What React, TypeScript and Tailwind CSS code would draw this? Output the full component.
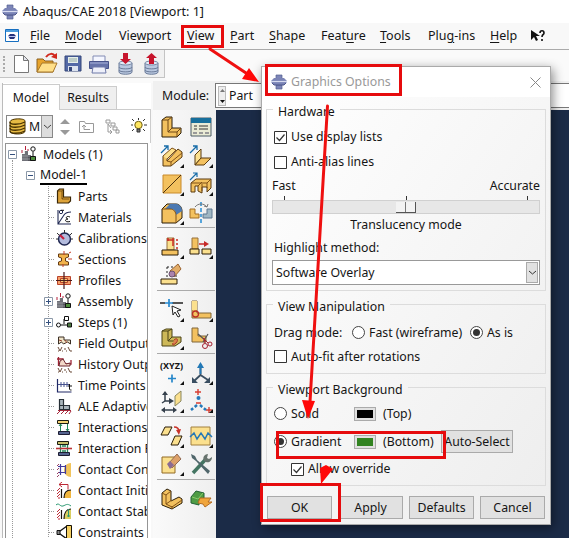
import React from "react";

const INK = "#2a1d08";
const GOLD = "#f3c15f";
const PALE = "#fbe08e";
const DARK = "#c98a2b";

function Svg({ s = 24, children, className = "" }: { s?: number; children: React.ReactNode; className?: string }) {
  return (
    <svg width={s} height={s} viewBox={`0 0 ${s} ${s}`} fill="none" className={`block shrink-0 ${className}`}>
      {children}
    </svg>
  );
}

function Logo() {
  return (
    <Svg s={16}>
      <path d="M5 1h6v4H5zM5 11h6v4H5z" fill="#7d86b8" stroke="#555f91" strokeWidth=".7" />
      <path d="M3 4h10l3 3v1l-3 3H3L0 8V7z" fill="#7b84b6" />
      <path d="M0 7.500h16" stroke="#d8dcf0" strokeWidth="1.200" />
      <path d="M1 9l2 2h10l2-2" stroke="#4d568a" />
    </Svg>
  );
}

const menus: [string, string, string, string][] = [
  ["", "F", "ile", "w-[35px]"],
  ["", "M", "odel", "w-[54px]"],
  ["Vie", "w", "port", "w-[68px]"],
  ["", "V", "iew", "w-[43px]"],
  ["", "P", "art", "w-[39px]"],
  ["", "S", "hape", "w-[52px]"],
  ["Feat", "u", "re", "w-[59px]"],
  ["", "T", "ools", "w-[48px]"],
  ["Plu", "g", "-ins", "w-[62px]"],
  ["", "H", "elp", "w-[41px]"],
];

function DbIcon({ up }: { up?: boolean }) {
  return (
    <Svg s={22}>
      <path d="M4 10v9c0 3 13 3 13 0v-9" fill="#b9c8e0" stroke="#6b7b99" />
      <ellipse cx="10.500" cy="10" rx="6.500" ry="2" fill="#e2eaf5" stroke="#7888a5" />
      <path d="M4 14c0 2.500 13 2.500 13 0M4 17c0 2.500 13 2.500 13 0" stroke="#6b7b99" />
      {up ? <path d="M8 11V5H5l5.500-5L16 5h-3v6z" fill="#c7142c" /> : <path d="M8 0v6H5l5.500 5L16 6h-3V0z" fill="#c7142c" />}
    </Svg>
  );
}

function Toolbar() {
  return (
    <div className="flex h-[28px] w-[165px] items-center border-r border-b border-[#c4c4c4] bg-[#f1f1f1] pl-[3px]">
      <div className="mr-[7px] h-[16px] w-[2px] border-l-2 border-dotted border-[#aaa]" />
      <Svg s={20} className="mr-[3px]">
        <path d="M2.500 1.500h9l5 5v12h-14z" fill="#fff" stroke="#777" />
        <path d="M11.500 1.500v5h5z" fill="#e2e4ec" stroke="#777" />
      </Svg>
      <Svg s={24} className="mr-[5px]">
        <path d="M2 20V7h6l2 2h8v11z" fill="#e7a32b" stroke="#8b6020" />
        <path d="M2 20l5-9h15l-4 9z" fill="#ffe08a" stroke="#a8782a" />
        <path d="M11 5c3-4 7-4 9-1" stroke="#d1281e" strokeWidth="2" />
        <path d="M22 1v6l-6-2z" fill="#d1281e" />
      </Svg>
      <Svg s={18} className="mr-[6px]">
        <path d="M1 1h16v15H1z" fill="#5369a6" stroke="#354779" />
        <path d="M4 2h10v6H4z" fill="#e6efea" />
        <path d="M5 4h8M5 6h8" stroke="#93a9a4" />
        <path d="M4 11h10v5H4z" fill="#dce3ef" />
        <path d="M5 12h3v4H5z" fill="#354779" />
      </Svg>
      <Svg s={22} className="mr-[5px]">
        <path d="M5 3h12v6H5z" fill="#f4f6ff" stroke="#828bb4" />
        <path d="M1.500 8.500h19v7h-19z" fill="#6673aa" stroke="#47538b" />
        <path d="M2 10h18" stroke="#a8b3da" />
        <path d="M5 14h12l1 6H4z" fill="#eef0fa" stroke="#6f7aa9" />
      </Svg>
      <DbIcon />
      <div className="w-[4px]" />
      <DbIcon up />
    </div>
  );
}

function AssemblyIcon() {
  return (
    <Svg s={17}>
      <path d="M1 8h3V5h3v4h3v6H1z" fill="#55545c" />
      <path d="M2 8v7M4 5v10M6 5v10M1 10h9M1 13h9" stroke="#aeb4bb" strokeWidth=".6" />
      <path d="M4.500 0v4M1 7V4M7 5V3" stroke="#b51f3a" />
      <circle cx="12" cy="3" r="2.200" fill="#fff" stroke="#111" />
      <path d="M12 5.500V10" stroke="#111" />
      <path d="M9.500 10.500h5v4h-5z" fill="#4d8b3c" stroke="#111" />
    </Svg>
  );
}

const treeIcons: Record<string, React.ReactNode> = {
  Parts: (
    <Svg s={17}>
      <path d="M1.500 3l2-2h4v8h7v4l-2 2H1.500z" fill="#dda33a" stroke="#3a2707" strokeWidth="1.200" />
      <path d="M2 3h4v8h7M6 11l2-2M6 3l1.500-2" stroke="#7d5412" />
    </Svg>
  ),
  Materials: (
    <Svg s={17}>
      <path d="M2 1v14h13M2 15L8 6c2-3 4-3 7-3" stroke="#222b55" strokeWidth="1.100" />
      <circle cx="5" cy="3" r="1.700" stroke="#222b55" />
      <path d="M5 1.300h3M14 8c-4-2-5 2-2 2-4 0-3 4 2 2.500" stroke="#111" />
    </Svg>
  ),
  Calibrations: (
    <Svg s={17}>
      <circle cx="8.500" cy="9" r="6" fill="#b3bbdd" stroke="#1f2650" strokeWidth="1.500" />
      <path d="M8 9L4 5" stroke="#c71e3e" strokeWidth="2.200" />
      <path d="M8.500 0v3M1 3l2 2M16 3l-2 2M0 9h2M15 9h2" stroke="#333" />
    </Svg>
  ),
  Sections: (
    <Svg s={17}>
      <path d="M2.500 3h10v3l-3 1v3l3 1v3h-10v-3l3-1V7l-3-1z" fill="#f1b34c" stroke="#643a13" />
      <path d="M8 0v4M12 8h4M7 13v3M13 2l2-1" stroke="#c53e28" />
    </Svg>
  ),
  Profiles: (
    <Svg s={17}>
      <path d="M1.500 4.500h13v8h-13z" fill="#f6a06a" stroke="#b8432b" />
      <path d="M4.500 6.500h7v4h-7z" fill="#f9ce7a" stroke="#b8432b" />
      <path d="M8 0v17M0 8.500h16" stroke="#4a1c1c" strokeWidth="1.200" />
    </Svg>
  ),
  Assembly: <AssemblyIcon />,
  "Steps (1)": (
    <Svg s={17}>
      <circle cx="2.500" cy="11" r="2" fill="#fff" stroke="#111" />
      <path d="M5 11h6M8 10V5M8 4.500h1" stroke="#111" />
      <path d="M8.500 2.500h4v4h-4z" fill="#fff" stroke="#111" />
      <path d="M11.500 9h4v4h-4z" fill="#4d7c41" stroke="#111" />
    </Svg>
  ),
  "Field Output Req": (
    <Svg s={17}>
      <path d="M2.500 2v7l3-2 2 2 4-2 3 2V5H8V2z" fill="#f0e4c8" stroke="#3b2f25" />
      <path d="M3 5l3 1M9 5l2 3" stroke="#98402c" />
      <path d="M2 12l2 4 2-4M9 13v2M12 12l2 4M2 16h1M6 16h1M10 16h1M14 16h2" stroke="#6b4a38" />
    </Svg>
  ),
  "History Output R": (
    <Svg s={17}>
      <path d="M2.500 1v9M1 3h6v5h8v-4" stroke="#9e2334" strokeWidth="1.300" />
      <path d="M4 5l3-2 3 5 4-1v3H3z" fill="#f3d8c8" stroke="#6c2830" />
      <path d="M2 12l2 4 2-4M9 13v2M12 12l2 4M2 16h1M6 16h1M10 16h1M14 16h2" stroke="#6b4a38" />
    </Svg>
  ),
  "Time Points": (
    <Svg s={17}>
      <path d="M1.500 2v13h14" stroke="#202966" strokeWidth="1.200" />
      <path d="M2 7.500h11M5 5v5M8 5v5M11 5v5" stroke="#44518e" />
      <path d="M13.500 7v5c0 1 1 1 2 1M12 9h4" stroke="#111" />
    </Svg>
  ),
  "ALE Adaptive Me": (
    <Svg s={17}>
      <path d="M3.500 1.500h4v6h6v4h-10z" fill="#aab6bd" stroke="#262f36" strokeWidth="1.200" />
      <path d="M3.500 7.500h4v4" stroke="#262f36" />
      <path d="M1 16l3-3M5 16l3-3M9 16l3-3M13 16l2-3M2 12.500h13" stroke="#a5273a" />
    </Svg>
  ),
  Interactions: (
    <Svg s={17}>
      <path d="M1.500 1.500h11v3h-11z" fill="#f6d477" stroke="#1d1d13" />
      <path d="M2.500 12.500h11v3h-11z" fill="#54638e" stroke="#1d1d33" />
      <path d="M4.500 5v7M11.500 5v7M3 7l1.500-2L6 7M10 10l1.500 2 1.500-2" stroke="#23875a" />
    </Svg>
  ),
  "Interaction Prop": (
    <Svg s={17}>
      <path d="M1.500 1.500h11v3h-11z" fill="#c8c06b" stroke="#1d1d13" />
      <path d="M2.500 12.500h11v3h-11z" fill="#54638e" stroke="#1d1d33" />
      <path d="M4.500 5v7M11.500 5v7M6 6h4M6 11h4" stroke="#23875a" strokeWidth="1.300" />
      <path d="M0 8.500h16" stroke="#ba3438" strokeWidth="1.600" />
    </Svg>
  ),
  "Contact Controls": (
    <Svg s={17}>
      <path d="M15 2c-5 0-7 4-7 7 0 4 3 7 7 7z" fill="#f1c45c" />
      <path d="M4.500 3v11M2 5.500h8M2 11.500h8M9.500 4v9" stroke="#423b9d" strokeWidth="1.200" />
      <path d="M1 5l2-2M1 9l2-2M1 13l2-2M1 16l2-2" stroke="#973e61" />
    </Svg>
  ),
  "Contact Initializ": (
    <Svg s={17}>
      <path d="M15 8c-5 0-7 4-7 8h7z" fill="#f1b63f" />
      <path d="M8 16c0-5 2-8 7-8M5.500 7v9" stroke="#18120c" strokeWidth="1.200" />
      <path d="M1 9l3-3M1 12l3-3M1 15l3-3M2 16h2M3 2.500h9v5M6 0L3 2.500 6 5" stroke="#bd2936" />
    </Svg>
  ),
  "Contact Stabiliza": (
    <Svg s={17}>
      <path d="M15 6c-5 0-7 6-7 10h7z" fill="#d9ce60" />
      <path d="M8 16c0-5 2-10 7-10M5.500 7v9" stroke="#18120c" strokeWidth="1.200" />
      <path d="M0 2c3-3 4 2 7 1s4-3 8 0M12.500 6v8M11 13h3" stroke="#2b9871" />
      <path d="M1 9l3-3M1 12l3-3M1 15l3-3M2 16h2" stroke="#bd2936" />
    </Svg>
  ),
  Constraints: (
    <Svg s={17}>
      <path d="M2 8.500L11 2M2 8.500L11 15" stroke="#111" strokeWidth="1.300" />
      <path d="M10.500 1.500h5v14h-5z" fill="#f4cf62" stroke="#171105" />
      <path d="M1 6.500h3v4H1z" fill="#888" stroke="#111" />
    </Svg>
  ),
};

function Expander({ plus }: { plus?: boolean }) {
  return (
    <Svg s={9} className="bg-white">
      <path d="M.5.5h8v8h-8z" stroke="#8b98a8" />
      <path d={plus ? "M2 4.500h5M4.500 2v5" : "M2 4.500h5"} stroke="#34507e" />
    </Svg>
  );
}

function Tree() {
  return (
    <div className="flex h-[395px] w-[143px] overflow-hidden border-t border-r border-l border-[#959595] bg-white">
      <div className="mt-[16px] w-[7px] shrink-0 border-r border-dotted border-[#999]" />
      <div className="-ml-[5px] w-[140px] shrink-0">
        <div className="flex h-[21px] items-center whitespace-nowrap">
          <Expander />
          <div className="w-[4px]" />
          <AssemblyIcon />
          <span className="ml-[5px]">Models (1)</span>
        </div>
        <div className="flex h-[21px] items-center pl-[18px] whitespace-nowrap">
          <Expander />
          <span className="ml-[5px] h-[19px] border-b-2 border-black leading-[18px]">Model-1</span>
        </div>
        <div className="ml-[40px] border-l border-dotted border-[#999]">
          {Object.entries(treeIcons).map(([name, icon]) => {
            const plus = name === "Assembly" || name === "Steps (1)";
            return (
              <div key={name} className="flex h-[21px] items-center whitespace-nowrap">
                {plus ? (
                  <div className="mr-[3px] -ml-[5px] shrink-0"><Expander plus /></div>
                ) : (
                  <div className="mr-[2px] w-[5px] shrink-0 border-t border-dotted border-[#999]" />
                )}
                {icon}
                <span className="ml-[5px]">{name}</span>
              </div>
            );
          })}
        </div>
      </div>
    </div>
  );
}

function LeftPanel() {
  return (
    <div className="flex h-[455px] w-[149px] shrink-0 flex-col border-l border-[#bbb] bg-white">
      <div className="flex h-[27px] items-end">
        <div className="flex h-[26px] w-[57px] items-center justify-center border-t border-r border-[#ccc] bg-white">Model</div>
        <div className="flex h-[24px] w-[57px] items-center justify-center border-t border-r border-b border-[#ccc] bg-[#efefef]">Results</div>
        <div className="h-px flex-1 bg-[#ccc]" />
      </div>
      <div className="flex h-[33px] items-center border-r border-[#ccc] pl-[3px]">
        <div className="flex h-[23px] w-[47px] items-center border border-[#888] bg-white pl-[2px]">
          <Svg s={18}>
            <path d="M1 4c0-4 15-4 15-1v10c0 4-15 4-15 0z" fill="#e7ba43" stroke="#473000" />
            <path d="M1 4c0 3 9 3 15 0M1 7c0 3 9 3 15 0M1 10c0 3 9 3 15 0M1 13c0 3 9 3 15 0" stroke="#473000" strokeWidth="1.300" />
          </Svg>
          <span className="w-[14px] shrink-0 pl-[2px]">M</span>
          <div className="flex h-[21px] flex-1 items-center justify-center border-l border-[#999] bg-[#ddd]">
            <Svg s={9}><path d="M1 3l3.500 3L8 3" stroke="#444" /></Svg>
          </div>
        </div>
        <Svg s={16} className="ml-[4px]"><path d="M8 0l5 5H3zM3 11h10l-5 5z" fill="#999" /></Svg>
        <Svg s={17} className="ml-[5px]"><path d="M1.500 14.500v-11h5l1 2h8v9zM12 11.500H6V7M4 9l2-2 2 2" stroke="#999" /></Svg>
        <Svg s={17} className="ml-[9px]"><path d="M2 2h4v3H2zM7 5h4v3H7zM12 12h3v3h-3zM9 9h4v3H9zM4 6v8h4M6 12l2 2-2 2M4 6l3 4" stroke="#999" /></Svg>
        <Svg s={17} className="ml-[9px]">
          <circle cx="8.500" cy="7" r="3.700" fill="#ffe761" stroke="#6e5c12" />
          <path d="M7 11h3v3H7z" fill="#777" stroke="#333" />
          <path d="M8.500 0v2M1 7h2M14 7h3M2 1l2 2M15 1l-2 2M2 13l2-2M15 13l-2-2" stroke="#333" />
        </Svg>
      </div>
      <div className="pl-[2px]"><Tree /></div>
    </div>
  );
}

const L = "M2 5l4-3h6v11h9v5l-4 4H2z";

const tools: React.ReactNode[][] = [
  [
    <><path d={L} fill={GOLD} stroke={INK} /><path d="M2 5h6v12h9l4-4M8 17l4-4M8 5l4-3M17 17v5" stroke="#704916" /></>,
    <><path d="M2 3h20v18H2z" fill="#eaebd5" stroke="#4b5b65" /><path d="M2 3h20v5H2z" fill="#176f9c" /><path d="M5 11h3M10 11h9M5 14h3M10 14h9" stroke="#333" /><path d="M4 18h4M10 18h4M16 18h4" stroke="#999" strokeWidth="2" /></>,
    <><path d="M3 12h4v5L18 5l4 3v5l-11 9H3z" fill={GOLD} stroke="#5a3b10" /><path d="M3 12l9-8 4 2-9 9" fill={PALE} stroke="#805117" /><path d="M11 22v-4L22 9M7 17l4 1" stroke="#805117" /><path d="M1 9L8 2M4 2h4v4" stroke="#176ca8" strokeWidth="1.300" /></>,
    <><path d="M6 11l6-6v9l-6 7z" fill={PALE} stroke="#5a3b10" /><path d="M6 21l6-7h10l-7 7z" fill={GOLD} stroke="#5a3b10" /><path d="M1 9L8 2M4 2h4v4" stroke="#176ca8" strokeWidth="1.300" /></>,
    <><path d="M3 3h18v18H3z" fill={GOLD} stroke={DARK} /><path d="M3 21L21 3" stroke="#4b320d" /></>,
    <><path d="M2 11l5-4h15v9l-4 4v-5h-5v6l-4-2v-5H6v6H2z" fill={GOLD} stroke="#5a3b10" /><path d="M2 11h16l4-4M9 14l4-4M13 19v-7M18 11v5" stroke="#805117" /><path d="M1 8L8 1M4 1h4v4" stroke="#176ca8" strokeWidth="1.200" /></>,
    <><path d="M2 8l5-5h9c4 0 6 4 6 7v7l-6 5H2z" fill={GOLD} stroke={INK} /><path d="M10 3h6c4 0 6 4 6 7l-6 4c0-4-2-6-6-6H5z" fill="#4b79b2" /><path d="M2 8h8c4 0 6 3 6 7v7" stroke="#805117" /></>,
    <><path d="M1 8h5v5h4v4H1z" fill={GOLD} stroke="#a36e25" /><path d="M23 8h-5v5h-4v4h9z" fill="#9fb7c4" stroke="#5d7790" /><path d="M12 1v4M12 7v4M12 13v3M12 18v4" stroke="#258cd4" strokeWidth="1.500" /><path d="M6 6c3-4 9-4 12 0M15 5l3 1 1-3" stroke="#777" /></>,
  ],
  [
    <><path d="M7 3h7v12H7z" fill={PALE} stroke="#96713a" /><path d="M2 15h16v5H2z" fill={GOLD} stroke={INK} /><path d="M7 5h7M8 3v3M13 3v8M17 4v2M17 8v2M17 12v2" stroke="#c92c25" strokeWidth="1.500" /></>,
    <><path d="M3 3h6v11H3z" fill={GOLD} stroke="#96713a" /><path d="M1 14h9v5H1zM13 14h9v5h-9z" fill={PALE} stroke={INK} /><path d="M10 9h6" stroke="#c72828" strokeWidth="1.500" /><path d="M15 6l5 3-5 3z" fill="#c72828" /></>,
    <><path d="M1 16h16v5H1z" fill={PALE} stroke={INK} /><path d="M7 4v11M7 4h7M16 8v7" stroke="#222" strokeDasharray="2 2" /><path d="M10 8l8-7 3 5-7 8z" fill="#e2ad68" stroke="#9b632f" /><circle cx="12" cy="11" r="3" fill="#ab83ad" stroke="#6d5272" /></>,
    null,
  ],
  [
    <><path d="M0 5h5M12 5h11" stroke="#222" strokeWidth="1.300" /><path d="M9 1v8M5 5h8" stroke="#2789cf" strokeWidth="1.700" /><path d="M12 8l9 4-4 1 3 5-2 1-3-5-2 3z" fill="#fff" stroke="#222" /></>,
    <><path d="M3 3h5v12h14v5H3z" fill={GOLD} stroke="#80673b" /><path d="M3 3h5v9H3z" fill={PALE} /><circle cx="6.500" cy="16" r="3" stroke="#b93226" strokeWidth="1.300" /></>,
    <><path d="M2 5l4-2h6v8h9v5l-6 4H2z" fill="#cdb858" stroke="#4b4317" /><path d="M2 5h6v10h9M8 5l4-2M8 15l4-4" stroke="#4b4317" /><path d="M14 14c3-3 5 0 2 3s-4 2-3 0" fill="#dc834f" stroke="#a93626" /></>,
    <><path d="M3 2h6v8h8v6H3z" fill={GOLD} stroke="#80673b" /><path d="M9 8l8 7M14 16l5-8" stroke="#555" strokeWidth="1.200" /><circle cx="16" cy="20" r="2.500" stroke="#a52231" /><circle cx="21" cy="18" r="2" stroke="#a52231" /><path d="M16 17l-1-5M19 17l-5-5" stroke="#a52231" /></>,
  ],
  [
    <path d="M12 1.500v8M8 5.500h8" stroke="#2687ca" strokeWidth="1.700" />,
    <><path d="M11.500 3v11M11.500 14L4 21M11.500 14l9 6" stroke="#394e61" strokeWidth="1.800" /><path d="M8 7l3.500-6L15 7z" fill="#2279b7" /><path d="M11.500 5v8" stroke="#2279b7" strokeWidth="1.800" /><path d="M3 16v6h6zM21 16v6h-6z" fill="#394e61" /></>,
    <><path d="M5 3v9h6M5 12l-3 2M3 21h12" stroke="#35404c" strokeWidth="1.500" /><path d="M2 6l3-4 3 4zM9 9l5 3-5 3zM1 21l4-3v6zM13 18l4 3-4 3z" fill="#35404c" /><path d="M15 7l6-5v10l-6 5z" fill={PALE} stroke="#8a875f" /></>,
    <><path d="M9 0v6M6 3h6M7 14h5M17 21h6M20 18v6" stroke="#d73e32" strokeWidth="1.400" /><circle cx="9.500" cy="9" r="2" fill="#2579b9" /><path d="M8 16l-6 5M11 16l6 5" stroke="#2579b9" strokeDasharray="3 2" strokeWidth="2.500" /></>,
  ],
  [
    <><path d="M5 3h7l-4 8H1zM15 12h7l-4 9h-7z" fill={PALE} stroke={INK} /><path d="M14 3c3 0 5 2 5 5" stroke="#c83229" strokeWidth="1.600" /><path d="M16 6l3 5 2-6z" fill="#c83229" /></>,
    <><path d="M2 3h19v18H2z" fill={PALE} stroke="#a2803f" /><path d="M1 13l4-4 3 6 4-6 4 6 3-6 4 4" stroke="#2478b7" strokeWidth="1.500" /></>,
    <><path d="M2 5h13v16H2z" fill={PALE} stroke="#926b25" /><path d="M9 11l8-9 4 5-9 9z" fill="#dda16a" stroke="#936b55" /><path d="M7 12l3-3 4 4-4 4z" fill="#8b6b93" /></>,
    <><path d="M4 21L16 8" stroke="#437562" strokeWidth="3.500" /><path d="M15 9c-2-4 1-7 4-7l-1 4 2 1 3-2c0 4-3 6-6 5z" fill="#67736e" /><path d="M2 2l4 2 2 4 13 11-2 3L7 9 3 6z" fill="#50666b" /></>,
  ],
  [
    <><path d="M2 6l5-4 4 2v10l8-4 3 2v4l-10 6-10-4z" fill={GOLD} stroke={INK} /><path d="M2 6l4 2v9l6 3 10-7M6 8l5-4M6 17l6-4M12 19v3" stroke="#805117" /></>,
    <><path d="M2 10l5-6 8 2v5l-5 3v4l-8-2z" fill="#4f9c45" stroke="#236235" /><path d="M3 10l6 2 5-6" stroke="#8acb6c" /><path d="M11 11h11l-3 4h4l-7 5-2-3-5-1z" fill="#f0a53c" stroke="#b46d24" /></>,
  ],
];

function Toolbox() {
  return (
    <div className="w-[63px] shrink-0 bg-linear-to-r from-[#fafafa] to-[#efefef] pt-[3px] pl-[4px]">
      {tools.map((group, g) => (
        <div
          key={g}
          className={`grid w-[58px] grid-cols-[29px_29px] content-start border-[#aaa] ${g === 0 ? "h-[115px] auto-rows-[28.500px] border-b" : g === 5 ? "h-[58px] auto-rows-[28px] pt-[5px]" : "h-[63px] auto-rows-[28px] border-b pt-[5px]"}`}
        >
          {group.map((art, i) => {
            const plain = g === 5 || (g === 0 && (i < 2 || i === 7)) || (g === 1 && i === 2) || ((g === 2 || g === 4) && i === 3);
            if (g === 3 && i === 0) {
              return (
                <div key={i} className="flex flex-col items-center">
                  <span className="h-[14px] text-[9px] leading-[14px] font-bold">(XYZ)</span>
                  <svg width="24" height="12" viewBox="0 0 24 12" fill="none">{art}<path d="M24 8v4h-4z" fill="#111" /></svg>
                </div>
              );
            }
            return (
              <div key={i} className="flex items-center justify-center">
                {art && <Svg s={24}>{art}{!plain && <path d="M24 20v4h-4z" fill="#111" />}</Svg>}
              </div>
            );
          })}
        </div>
      ))}
    </div>
  );
}

function Check({ on }: { on?: boolean }) {
  return (
    <Svg s={13}>
      <path d="M.5.5h12v12H.5z" fill="#fff" stroke="#333" />
      {on && <path d="M2.500 6.500l3 3 5-6" stroke="#333" strokeWidth="1.200" />}
    </Svg>
  );
}

function Radio({ on }: { on?: boolean }) {
  return (
    <Svg s={13}>
      <circle cx="6.500" cy="6.500" r="6" fill="#fff" stroke="#444" />
      {on && <circle cx="6.500" cy="6.500" r="3.500" fill="#333" />}
    </Svg>
  );
}

function Swatch({ green }: { green?: boolean }) {
  return (
    <div className="h-[14px] w-[22px] shrink-0 border border-[#aaa] bg-[#e1e1e1] p-[2px]">
      <div className={`h-full w-full ${green ? "bg-[#328321]" : "bg-black"}`} />
    </div>
  );
}

function Group({ title, className, children }: { title: string; className: string; children: React.ReactNode }) {
  return (
    <fieldset className={`w-[280px] border border-[#dcdcdc] px-[5px] pt-[7px] ${className}`}>
      <legend className="ml-[1px] h-[12px] px-[5px] leading-[17px]">{title}</legend>
      {children}
    </fieldset>
  );
}

function Dialog() {
  return (
    <div className="absolute top-[66px] left-[261px] h-[459px] w-[290px] border border-[#aaa] bg-[#f4f4f4] shadow-[2px_3px_10px_rgba(0,0,0,0.450)]">
      <div className="flex h-[30px] items-center bg-white pl-[9px] text-[#999]">
        <Logo />
        <span className="ml-[4px]">Graphics Options</span>
        <Svg s={11} className="mr-[9px] ml-auto"><path d="M.5.5l10 10M10.500.5l-10 10" stroke="#888" /></Svg>
      </div>
      <div className="h-[427px] bg-linear-to-br from-white to-[#ededed] pt-[6px] pl-[4px]">
        <Group title="Hardware" className="h-[188px]">
          <div className="flex h-[25px] items-center gap-[4px] pt-[5px] pl-[2px]"><Check on />Use display lists</div>
          <div className="flex h-[25px] items-center gap-[4px] pt-[5px] pl-[2px]"><Check />Anti-alias lines</div>
          <div className="mt-[4px] flex h-[20px] items-center justify-between"><span>Fast</span><span>Accurate</span></div>
          <div className="flex h-[4px] justify-between px-[12px]"><i className="w-px bg-[#333]" /><i className="w-px bg-[#333]" /><i className="w-px bg-[#333]" /></div>
          <div className="flex h-[14px] items-center justify-center border border-[#d0d0d0] bg-[#e7e7e7]">
            <div className="flex h-[11px] w-[20px] border-r border-b border-[#555] bg-[#f3f3f3]"><div className="w-[10px] border-r border-[#777]" /></div>
          </div>
          <div className="h-[22px] text-center leading-[22px]">Translucency mode</div>
          <div className="h-[24px] pl-[2px] leading-[24px]">Highlight method:</div>
          <div className="flex h-[25px] w-[268px] items-center border border-[#999] bg-white pl-[3px]">
            <span>Software Overlay</span>
            <div className="mr-px ml-auto flex h-[21px] w-[12px] items-center justify-center border border-[#aaa] bg-[#e1e1e1]"><Svg s={9}><path d="M1 3l3.500 3L8 3" stroke="#333" /></Svg></div>
          </div>
        </Group>
        <Group title="View Manipulation" className="mt-[7px] h-[76px]">
          <div className="flex h-[23px] items-center pt-[8px] pl-[2px]">
            <span className="w-[78px]">Drag mode:</span><Radio /><span className="ml-[4px] w-[101px] whitespace-nowrap">Fast (wireframe)</span><Radio on /><span className="ml-[4px]">As is</span>
          </div>
          <div className="flex h-[27px] items-center gap-[4px] pt-[6px] pl-[2px]"><Check />Auto-fit after rotations</div>
        </Group>
        <Group title="Viewport Background" className="mt-[7px] h-[105px]">
          <div className="flex h-[20px] items-center pt-[7px] pl-[2px]"><Radio /><span className="ml-[4px] w-[63px]">Solid</span><Swatch /><span className="ml-[7px]">(Top)</span></div>
          <div className="mt-[10px] flex h-[23px] items-center pl-[2px]">
            <Radio on /><span className="ml-[4px] w-[63px]">Gradient</span><Swatch green /><span className="ml-[7px] w-[58px]">(Bottom)</span>
            <div className="flex h-[23px] w-[72px] items-center justify-center border border-[#aaa] bg-[#e1e1e1] whitespace-nowrap">Auto-Select</div>
          </div>
          <div className="mt-[4px] flex h-[24px] items-center gap-[4px] pl-[19px]"><Check on />Allow override</div>
        </Group>
        <div className="mt-[10px] flex gap-[6px] pl-px">
          {["OK", "Apply", "Defaults", "Cancel"].map((b) => (
            <div key={b} className="flex h-[23px] w-[65px] items-center justify-center border border-[#aaa] bg-[#e1e1e1]">{b}</div>
          ))}
        </div>
      </div>
    </div>
  );
}

export default function App() {
  return (
    <div className="relative flex h-[538px] w-[569px] flex-col overflow-hidden bg-white font-['Noto_Sans','Open_Sans',sans-serif] text-[12.300px] leading-[18px] text-[#151515]">
      <header className="flex h-[23px] items-center pl-[2px] text-[12.500px]"><Logo /><span className="ml-[5px]">Abaqus/CAE 2018 [Viewport: 1]</span></header>
      <nav className="flex h-[27px] items-center border-b border-[#aaa] bg-[#f8f8f8] pl-[5px] text-[12.500px]">
        <Svg s={14} className="mr-[11px]"><path d="M.5.5h13v12H.5z" fill="#fff" stroke="#176fc0" /><path d="M1 2h12" stroke="#4d9ddd" strokeWidth="2" /><path d="M3 7l2-2h4l2 2-2 3H5z" fill="#25327b" /><path d="M3 7.500h8" stroke="#bbc6ef" /></Svg>
        {menus.map(([a, u, b, w]) => <div key={u + b} className={`shrink-0 ${w}`}>{a}<u className="underline-offset-2">{u}</u>{b}</div>)}
        <Svg s={14}><path d="M0 1v10l3-3 2 4 2-1-2-4h4z" fill="#111" /><path d="M9 4c0-3 4-3 4 0 0 2-2 1-2 4M11 10v2" stroke="#111" strokeWidth="1.600" /></Svg>
      </nav>
      <div className="flex h-[33px] bg-[#fafafa]"><Toolbar /></div>
      <main className="flex h-[455px] bg-[#f8f8f8] pl-[2px]">
        <LeftPanel />
        <div className="ml-[2px] flex min-w-0 flex-1 flex-col">
          <div className="-mt-[2px] flex h-[29px] items-center bg-[#f0f0f0] pl-[9px]">
            <span className="w-[53px]">Module:</span>
            <div className="flex h-[25px] flex-1 items-center border-y border-l border-[#777] bg-white">
              <div className="mx-[2px] flex h-[20px] w-[8px] flex-col justify-between border border-[#bbb] bg-[#eee]"><Svg s={7}><path d="M1 5l2.500-3L6 5z" fill="#777" /></Svg><Svg s={7}><path d="M1 2h5L3.500 5z" fill="#111" /></Svg></div>
              <span className="ml-[1px]">Part</span>
            </div>
          </div>
          <div className="flex h-[428px]"><Toolbox /><div className="flex-1 bg-[#1b2b47]" /></div>
        </div>
      </main>
      <Dialog />
      <svg className="pointer-events-none absolute inset-0" width="569" height="538" fill="none">
        <path d="M182.500 26.500h40v20h-40zM266.500 65.500h134v29h-134zM277.500 432.500h167v25h-167zM261.500 484.500h78v36h-78z" stroke="#e60b0d" strokeWidth="3" />
        <path d="M210 49l36 24M327.500 106L310 402" stroke="#ef1010" strokeWidth="3" strokeLinecap="round" />
        <path d="M259 82l-17-3 7-11zM308 419l-6-19 13 1zM321 484l-1-16 6-3 7 4z" fill="#ff0808" />
      </svg>
    </div>
  );
}
